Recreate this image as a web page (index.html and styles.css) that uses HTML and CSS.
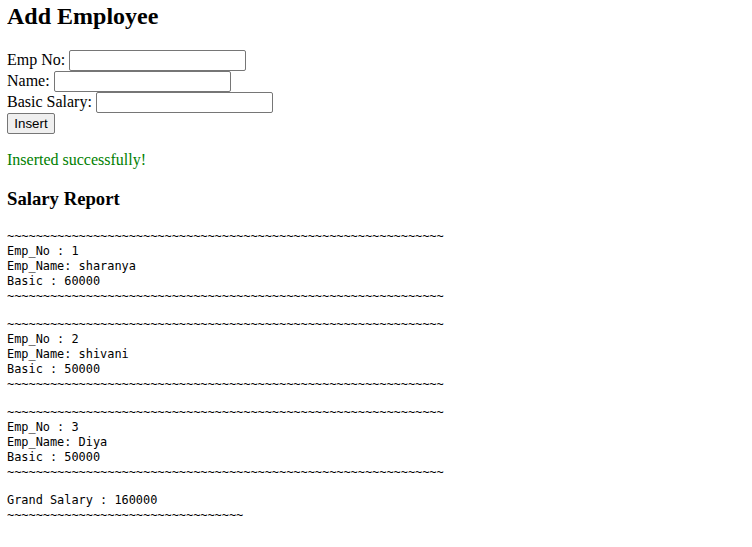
FILE: index.html
```html
<!DOCTYPE html>
<html lang="en">
<head>
<meta charset="utf-8">
<title>Add Employee</title>
<link rel="stylesheet" href="styles.css">
</head>
<body>
<h2 class="title">Add Employee</h2>
<form class="emp-form">
  <div class="row"><label>Emp No:</label><input class="field" type="text"></div>
  <div class="row"><label>Name:</label><input class="field" type="text"></div>
  <div class="row"><label>Basic Salary:</label><input class="field" type="text"></div>
  <div class="row"><button class="btn" type="button">Insert</button></div>
</form>
<p class="msg">Inserted successfully!</p>
<h3 class="subtitle">Salary Report</h3>
<pre class="rec">~~~~~~~~~~~~~~~~~~~~~~~~~~~~~~~~~~~~~~~~~~~~~~~~~~~~~~~~~~~~~
Emp_No : 1
Emp_Name: sharanya
Basic : 60000
~~~~~~~~~~~~~~~~~~~~~~~~~~~~~~~~~~~~~~~~~~~~~~~~~~~~~~~~~~~~~</pre>
<pre class="rec">~~~~~~~~~~~~~~~~~~~~~~~~~~~~~~~~~~~~~~~~~~~~~~~~~~~~~~~~~~~~~
Emp_No : 2
Emp_Name: shivani
Basic : 50000
~~~~~~~~~~~~~~~~~~~~~~~~~~~~~~~~~~~~~~~~~~~~~~~~~~~~~~~~~~~~~</pre>
<pre class="rec">~~~~~~~~~~~~~~~~~~~~~~~~~~~~~~~~~~~~~~~~~~~~~~~~~~~~~~~~~~~~~
Emp_No : 3
Emp_Name: Diya
Basic : 50000
~~~~~~~~~~~~~~~~~~~~~~~~~~~~~~~~~~~~~~~~~~~~~~~~~~~~~~~~~~~~~</pre>
<pre class="rec">Grand Salary : 160000
~~~~~~~~~~~~~~~~~~~~~~~~~~~~~~~~~</pre>
</body>
</html>
```
FILE: styles.css
```css
html, body {
  background: #ffffff;
}
body {
  margin: 3px 8px 8px 7px;
  font-family: "Liberation Serif", "Times New Roman", serif;
  font-size: 16px;
  color: #000;
}
.title {
  margin: 0 0 19.92px;
  font-size: 24px;
  font-weight: bold;
}
.emp-form {
  margin: 0;
}
.row {
  display: flex;
  align-items: center;
  gap: 4px;
  height: 21px;
}
.field {
  box-sizing: border-box;
  width: 177px;
  height: 21px;
  margin: 0;
  padding: 1px 2px;
  border: 1px solid #767676;
  border-radius: 2px;
  background: #fff;
  font-family: "Liberation Sans", Arial, sans-serif;
  font-size: 13.33px;
}
.btn {
  box-sizing: border-box;
  width: 48px;
  height: 21px;
  margin: 0;
  padding: 1px 6px;
  border: 1px solid #767676;
  border-radius: 2px;
  background: #efefef;
  color: #000;
  font-family: "Liberation Sans", Arial, sans-serif;
  font-size: 13.33px;
}
.msg {
  margin: 17px 0 16px;
  color: #008000;
}
.subtitle {
  margin: 18.72px 0 19px;
  font-size: 18.72px;
  font-weight: bold;
}
.rec {
  margin: 13px 0;
  font-family: "DejaVu Sans Mono", "Liberation Mono", monospace;
  font-size: 11.9px;
  line-height: 15px;
}
```
